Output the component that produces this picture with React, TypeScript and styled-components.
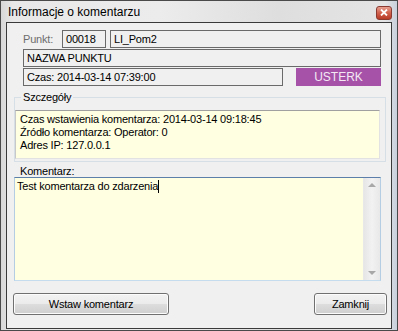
import styled, { createGlobalStyle } from "styled-components";

const Global = createGlobalStyle`
  html, body { margin: 0; padding: 0; background: #ffffff; }
  * { box-sizing: border-box; }
  body { font-family: "Liberation Sans", Arial, sans-serif; font-size: 11px; color: #000; }
`;

const Window = styled.div`
  width: 398px;
  height: 331px;
  border: 1px solid #4a4a4a;
  background: linear-gradient(90deg, #d8d8d8 0%, #e8e8e8 3%, #ececec 40%, #dedede 70%, #e4e4e4 97%, #c8d0dc 100%);
  display: flex;
  flex-direction: column;
  padding: 0 5px 1px 5px;
`;

const TitleBar = styled.div`
  height: 21px;
  flex: none;
  display: flex;
  align-items: center;
  justify-content: space-between;
  padding-left: 2px;
  font-size: 12px;
  color: #000;
`;

const CloseButton = styled.div`
  width: 16px;
  height: 14px;
  margin: 2px 0 0 0;
  border: 1px solid #8a3a30;
  border-radius: 3px;
  background: linear-gradient(180deg, #e8a090 0%, #d0604c 50%, #b83c28 100%);
  display: flex;
  align-items: center;
  justify-content: center;
`;

const Client = styled.div`
  flex: 1;
  border: 1px solid #3a3a3a;
  background: #f0f0f0;
  display: flex;
  flex-direction: column;
  letter-spacing: -0.2px;
`;

const TopSection = styled.div`
  display: flex;
  flex-direction: column;
  gap: 1px;
  padding: 7px 10px 0 16px;
`;

const Row = styled.div`
  display: flex;
  align-items: stretch;
  height: 18px;
`;

const DisabledLabel = styled.div`
  width: 39px;
  display: flex;
  align-items: center;
  color: #6d6d6d;
`;

const Box = styled.div<{ $w?: number }>`
  ${(p) => (p.$w ? `width: ${p.$w}px; flex: none;` : "flex: 1;")}
  border: 1px solid #6a6a6a;
  display: flex;
  align-items: center;
  padding-left: 3px;
  white-space: nowrap;
  overflow: hidden;
`;

const Status = styled.div`
  width: 85px;
  margin-left: 13px;
  background: #a552a8;
  color: #f4e8f4;
  display: flex;
  align-items: center;
  justify-content: center;
  font-size: 12px;
  letter-spacing: 0;
`;

const Group = styled.fieldset`
  margin: 5px 5px 0 7px;
  padding: 0 0 2px 0;
  border: 1px solid #d5dfe5;
  min-width: 0;
`;

const Legend = styled.legend`
  margin-left: 6px;
  padding: 0 2px;
  font-size: 11px;
`;

const InfoBox = styled.div`
  margin: 7px 5px 0 0;
  height: 49px;
  background: #ffffe1;
  border-top: 1px solid #a0a0a0;
  border-left: 1px solid #c8c8c8;
  border-right: 1px solid #e2e2e2;
  border-bottom: 1px solid #e2e2e2;
  padding: 2px 0 0 4px;
  line-height: 13px;
`;

const FieldLabel = styled.div`
  margin: 3px 0 0 13px;
  height: 12px;
  line-height: 12px;
`;

const Memo = styled.div`
  margin: 0 10px 0 7px;
  height: 104px;
  display: flex;
  background: #ffffe1;
  border-top: 1px solid #5b7fa8;
  border-left: 1px solid #b5cde3;
  border-right: 1px solid #b5cde3;
  border-bottom: 1px solid #c5dcee;
`;

const MemoText = styled.div`
  flex: 1;
  padding: 2px 0 0 2px;
  line-height: 13px;
`;

const Caret = styled.span`
  display: inline-block;
  width: 1px;
  height: 13px;
  background: #000;
  vertical-align: top;
`;

const ScrollBar = styled.div`
  width: 17px;
  flex: none;
  background: linear-gradient(90deg, #e6e6e6, #f2f2f2 50%, #e8e8e8);
  border-left: 1px solid #e8e8e8;
  display: flex;
  flex-direction: column;
  justify-content: space-between;
  align-items: center;
  padding: 5px 0 5px;
`;

const Arrow = styled.div<{ $down?: boolean }>`
  width: 0;
  height: 0;
  border-left: 4px solid transparent;
  border-right: 4px solid transparent;
  ${(p) =>
    p.$down
      ? "border-top: 4px solid #a8a8a8;"
      : "border-bottom: 4px solid #a8a8a8;"}
`;

const ButtonRow = styled.div`
  display: flex;
  justify-content: space-between;
  margin: 12px 4px 0 6px;
`;

const Button = styled.div<{ $w: number }>`
  width: ${(p) => p.$w}px;
  height: 22px;
  border: 1px solid #707070;
  border-radius: 3px;
  background: linear-gradient(180deg, #f2f2f2 0%, #ebebeb 50%, #dddddd 51%, #cfcfcf 100%);
  box-shadow: inset 0 0 0 1px #fcfcfc;
  display: flex;
  align-items: center;
  justify-content: center;
`;

export default function App() {
  return (
    <>
      <Global />
      <Window>
        <TitleBar>
          <span>Informacje o komentarzu</span>
          <CloseButton>
            <svg width="8" height="7" viewBox="0 0 8 7">
              <path d="M1 0.5 L7 6.5 M7 0.5 L1 6.5" stroke="#ffffff" strokeWidth="1.8" />
            </svg>
          </CloseButton>
        </TitleBar>
        <Client>
          <TopSection>
            <Row>
              <DisabledLabel>Punkt:</DisabledLabel>
              <Box $w={44}>00018</Box>
              <Box style={{ marginLeft: 4 }}>LI_Pom2</Box>
            </Row>
            <Row>
              <Box>NAZWA PUNKTU</Box>
            </Row>
            <Row>
              <Box>Czas: 2014-03-14 07:39:00</Box>
              <Status>USTERK</Status>
            </Row>
          </TopSection>
          <Group>
            <Legend>Szczegóły</Legend>
            <InfoBox>
              <div>Czas wstawienia komentarza: 2014-03-14 09:18:45</div>
              <div>Źródło komentarza: Operator: 0</div>
              <div>Adres IP: 127.0.0.1</div>
            </InfoBox>
          </Group>
          <FieldLabel>Komentarz:</FieldLabel>
          <Memo>
            <MemoText>
              Test komentarza do zdarzenia
              <Caret />
            </MemoText>
            <ScrollBar>
              <Arrow />
              <Arrow $down />
            </ScrollBar>
          </Memo>
          <ButtonRow>
            <Button $w={156}>Wstaw komentarz</Button>
            <Button $w={73}>Zamknij</Button>
          </ButtonRow>
        </Client>
      </Window>
    </>
  );
}
